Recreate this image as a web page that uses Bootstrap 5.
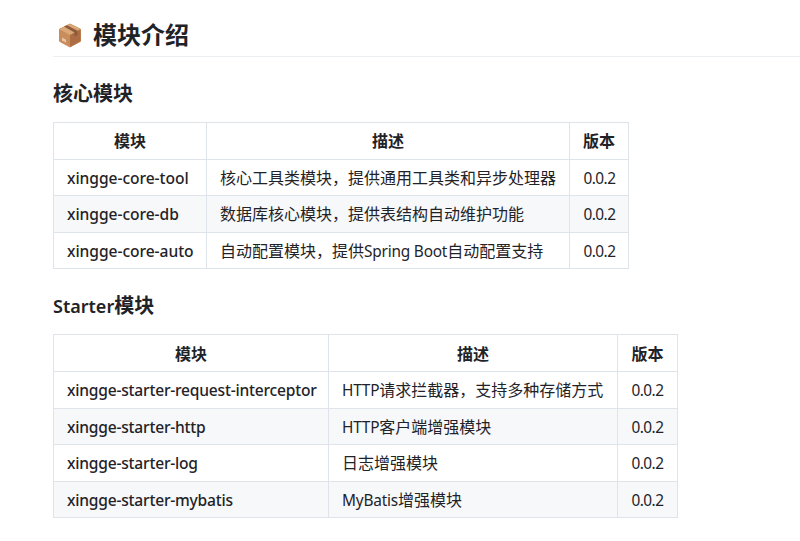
<!DOCTYPE html>
<html lang="zh">
<head>
<meta charset="utf-8">
<link href="https://cdn.jsdelivr.net/npm/bootstrap@5.3.0/dist/css/bootstrap.min.css" rel="stylesheet">
<style>
html,body{height:541px;overflow:hidden}
body{background:#fff;color:#1f2328;font-family:"Noto Sans","Noto Sans CJK SC",sans-serif;font-size:16px;line-height:1.5}
.doc-wrap{padding:17px 0 0 53px}
.doc-h1{font-size:24px;font-weight:600;line-height:36px;margin:0;padding:0 0 3px 5px;border-bottom:1px solid #eceff2;display:flex;align-items:center;gap:11px}
.doc-h2{font-size:20px;font-weight:600;line-height:29px;margin:22px 0 14px}
.doc-h2.next{margin-top:22px;margin-bottom:14px}
.latin-h{font-size:18px;line-height:1}
.latin{font-size:15.4px;letter-spacing:-.2px;line-height:1}
.ver{font-size:15.4px;letter-spacing:-.55px}
.doc-table{border-collapse:collapse;table-layout:fixed;margin:0}
.doc-table.core{width:575px}
.doc-table.starter{width:624px}
.core .c1{width:153px}.core .c2{width:363px}.core .c3{width:59px}
.starter .c1{width:275px}.starter .c2{width:289px}.starter .c3{width:60px}
.doc-table th,.doc-table td{border:1px solid #dfe4ea;padding:6.3px 13px 5.3px;line-height:24px;white-space:nowrap}
.doc-table th{font-weight:600;text-align:center;padding-left:0;padding-right:0}
.doc-table.core th{padding-top:5.8px;padding-bottom:5.8px}
.doc-table td:first-child{font-weight:500;font-size:15.6px}
.doc-table.core td:first-child{letter-spacing:-.05px}
.doc-table.starter td:first-child{letter-spacing:-.22px}
.doc-table td.ver{padding:7px 0 4.6px 13.5px}
.doc-table tbody tr:nth-child(even) td{background:#f6f8fa}
</style>
</head>
<body>
<main class="doc-wrap">
<h1 class="doc-h1"><svg width="24" height="25" viewBox="0 0 24 25" aria-hidden="true"><polygon points="12,1 22.5,6.2 22.5,18.3 12,24 1.5,18.3 1.5,6.2" fill="#c98d5c" stroke="#c98d5c" stroke-linejoin="round"/><polygon points="12,1 22.5,6.2 12,12 1.5,6.2" fill="#dba878"/><polygon points="22.5,6.2 12,12 12,24 22.5,18.3" fill="#ad6d44"/><polygon points="6,3.6 9,2.2 19.5,7.8 19.5,12 16.5,13.5 16.5,9.5" fill="#8d5a3a"/><polygon points="4,14.5 8,16.8 8,19.6 4,17.4" fill="#e6c5ae"/></svg><span>模块介绍</span></h1>
<h2 class="doc-h2">核心模块</h2>
<table class="doc-table core">
<colgroup><col class="c1"><col class="c2"><col class="c3"></colgroup>
<thead><tr><th>模块</th><th>描述</th><th>版本</th></tr></thead>
<tbody>
<tr><td>xingge-core-tool</td><td>核心工具类模块，提供通用工具类和异步处理器</td><td class="ver">0.0.2</td></tr>
<tr><td>xingge-core-db</td><td>数据库核心模块，提供表结构自动维护功能</td><td class="ver">0.0.2</td></tr>
<tr><td>xingge-core-auto</td><td>自动配置模块，提供<span class="latin">Spring Boot</span>自动配置支持</td><td class="ver">0.0.2</td></tr>
</tbody>
</table>
<h2 class="doc-h2 next"><span class="latin-h">Starter</span>模块</h2>
<table class="doc-table starter">
<colgroup><col class="c1"><col class="c2"><col class="c3"></colgroup>
<thead><tr><th>模块</th><th>描述</th><th>版本</th></tr></thead>
<tbody>
<tr><td>xingge-starter-request-interceptor</td><td><span class="latin">HTTP</span>请求拦截器，支持多种存储方式</td><td class="ver">0.0.2</td></tr>
<tr><td>xingge-starter-http</td><td><span class="latin">HTTP</span>客户端增强模块</td><td class="ver">0.0.2</td></tr>
<tr><td>xingge-starter-log</td><td>日志增强模块</td><td class="ver">0.0.2</td></tr>
<tr><td>xingge-starter-mybatis</td><td><span class="latin">MyBatis</span>增强模块</td><td class="ver">0.0.2</td></tr>
</tbody>
</table>
</main>
</body>
</html>
